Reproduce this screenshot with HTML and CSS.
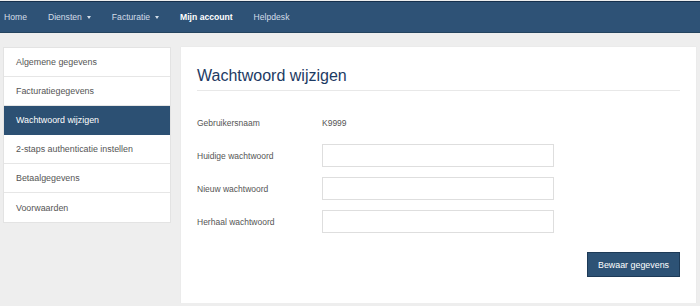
FILE: index.html
```html
<!DOCTYPE html>
<html lang="nl">
<head>
    <meta charset="UTF-8">
    <meta name="viewport" content="width=device-width, initial-scale=1.0">
    <title>Mijn account - Wachtwoord wijzigen</title>
    <link rel="stylesheet" href="styles.css">
</head>
<body>
    <div id="nav">
        <a href="#">Home</a>
        <a href="#">Diensten <span class="caret"></span></a>
        <a href="#">Facturatie <span class="caret"></span></a>
        <a href="#" class="active">Mijn account</a>
        <a href="#">Helpdesk</a>
    </div>

    <div id="main">
        <div class="sidebar">
            <a href="#">Algemene gegevens</a>
            <a href="#">Facturatiegegevens</a>
            <a href="#" class="current">Wachtwoord wijzigen</a>
            <a href="#">2-staps authenticatie instellen</a>
            <a href="#">Betaalgegevens</a>
            <a href="#">Voorwaarden</a>
        </div>

        <div class="panel">
            <h1>Wachtwoord wijzigen</h1>
            <form class="form">
                <div class="row">
                    <label>Gebruikersnaam</label>
                    <span class="value">K9999</span>
                </div>
                <div class="row">
                    <label for="old">Huidige wachtwoord</label>
                    <input type="password" id="old">
                </div>
                <div class="row">
                    <label for="new">Nieuw wachtwoord</label>
                    <input type="password" id="new">
                </div>
                <div class="row">
                    <label for="repeat">Herhaal wachtwoord</label>
                    <input type="password" id="repeat">
                </div>
                <div class="actions">
                    <button type="button" id="save">Bewaar gegevens</button>
                </div>
            </form>
        </div>
    </div>
</body>
</html>
```

FILE: styles.css
```css
* {
    margin: 0;
    padding: 0;
    box-sizing: border-box;
}
html, body {
    background-color: #eeeeee;
    font-family: "Liberation Sans", Arial, sans-serif;
    color: #555;
}
body {
    padding-top: 1px;
}
a {
    text-decoration: none;
    color: inherit;
}

/* top bar */
#nav {
    display: flex;
    align-items: center;
    gap: 21px;
    height: 32px;
    padding-left: 4px;
    background-color: #2e5276;
    border-top: 1px solid #16304d;
    border-bottom: 1px solid #24445f;
}
#nav a {
    color: #d3dde8;
    font-size: 8.6px;
    display: flex;
    align-items: center;
}
#nav a.active {
    color: #fff;
    font-weight: bold;
}
.caret {
    display: inline-block;
    margin-left: 5px;
    border-left: 2.5px solid transparent;
    border-right: 2.5px solid transparent;
    border-top: 3px solid #d3dde8;
}

/* page */
#main {
    display: flex;
    align-items: flex-start;
    gap: 10px;
    padding: 14px 4px 0 3px;
}

.sidebar {
    width: 168px;
    background: #fff;
    border: 1px solid #e3e3e3;
    display: flex;
    flex-direction: column;
}
.sidebar a {
    height: 29px;
    display: flex;
    align-items: center;
    padding-left: 12px;
    font-size: 8.9px;
    color: #555;
    border-bottom: 1px solid #e6e6e6;
}
.sidebar a:last-child {
    border-bottom: none;
}
.sidebar a.current {
    background-color: #2c5073;
    color: #fff;
    border-bottom-color: #2c5073;
}

.panel {
    flex: 1;
    background: #fff;
    padding: 20px 16px 26px 16px;
    box-shadow: 0 0 1px #dcdcdc;
}
.panel h1 {
    font-size: 16px;
    font-weight: normal;
    color: #1d3a63;
    line-height: 18px;
    padding-bottom: 5px;
    border-bottom: 1px solid #e8e8e8;
}

.form {
    padding-top: 20px;
}
.row {
    display: flex;
    align-items: center;
    height: 23px;
    margin-bottom: 10px;
}
.row label {
    width: 125px;
    font-size: 8.5px;
    color: #555;
}
.row .value {
    font-size: 8.5px;
    color: #555;
}
.row input {
    width: 232px;
    height: 23px;
    border: 1px solid #dedede;
    background: #fff;
    outline: none;
}
.actions {
    display: flex;
    justify-content: flex-end;
    padding-top: 9px;
}
#save {
    width: 93px;
    height: 25px;
    background-color: #2d5275;
    border: 1px solid #1d3a57;
    color: #fff;
    font-family: "Liberation Sans", Arial, sans-serif;
    font-size: 8.9px;
    cursor: pointer;
}
#save:hover {
    background-color: #24445f;
}
```
